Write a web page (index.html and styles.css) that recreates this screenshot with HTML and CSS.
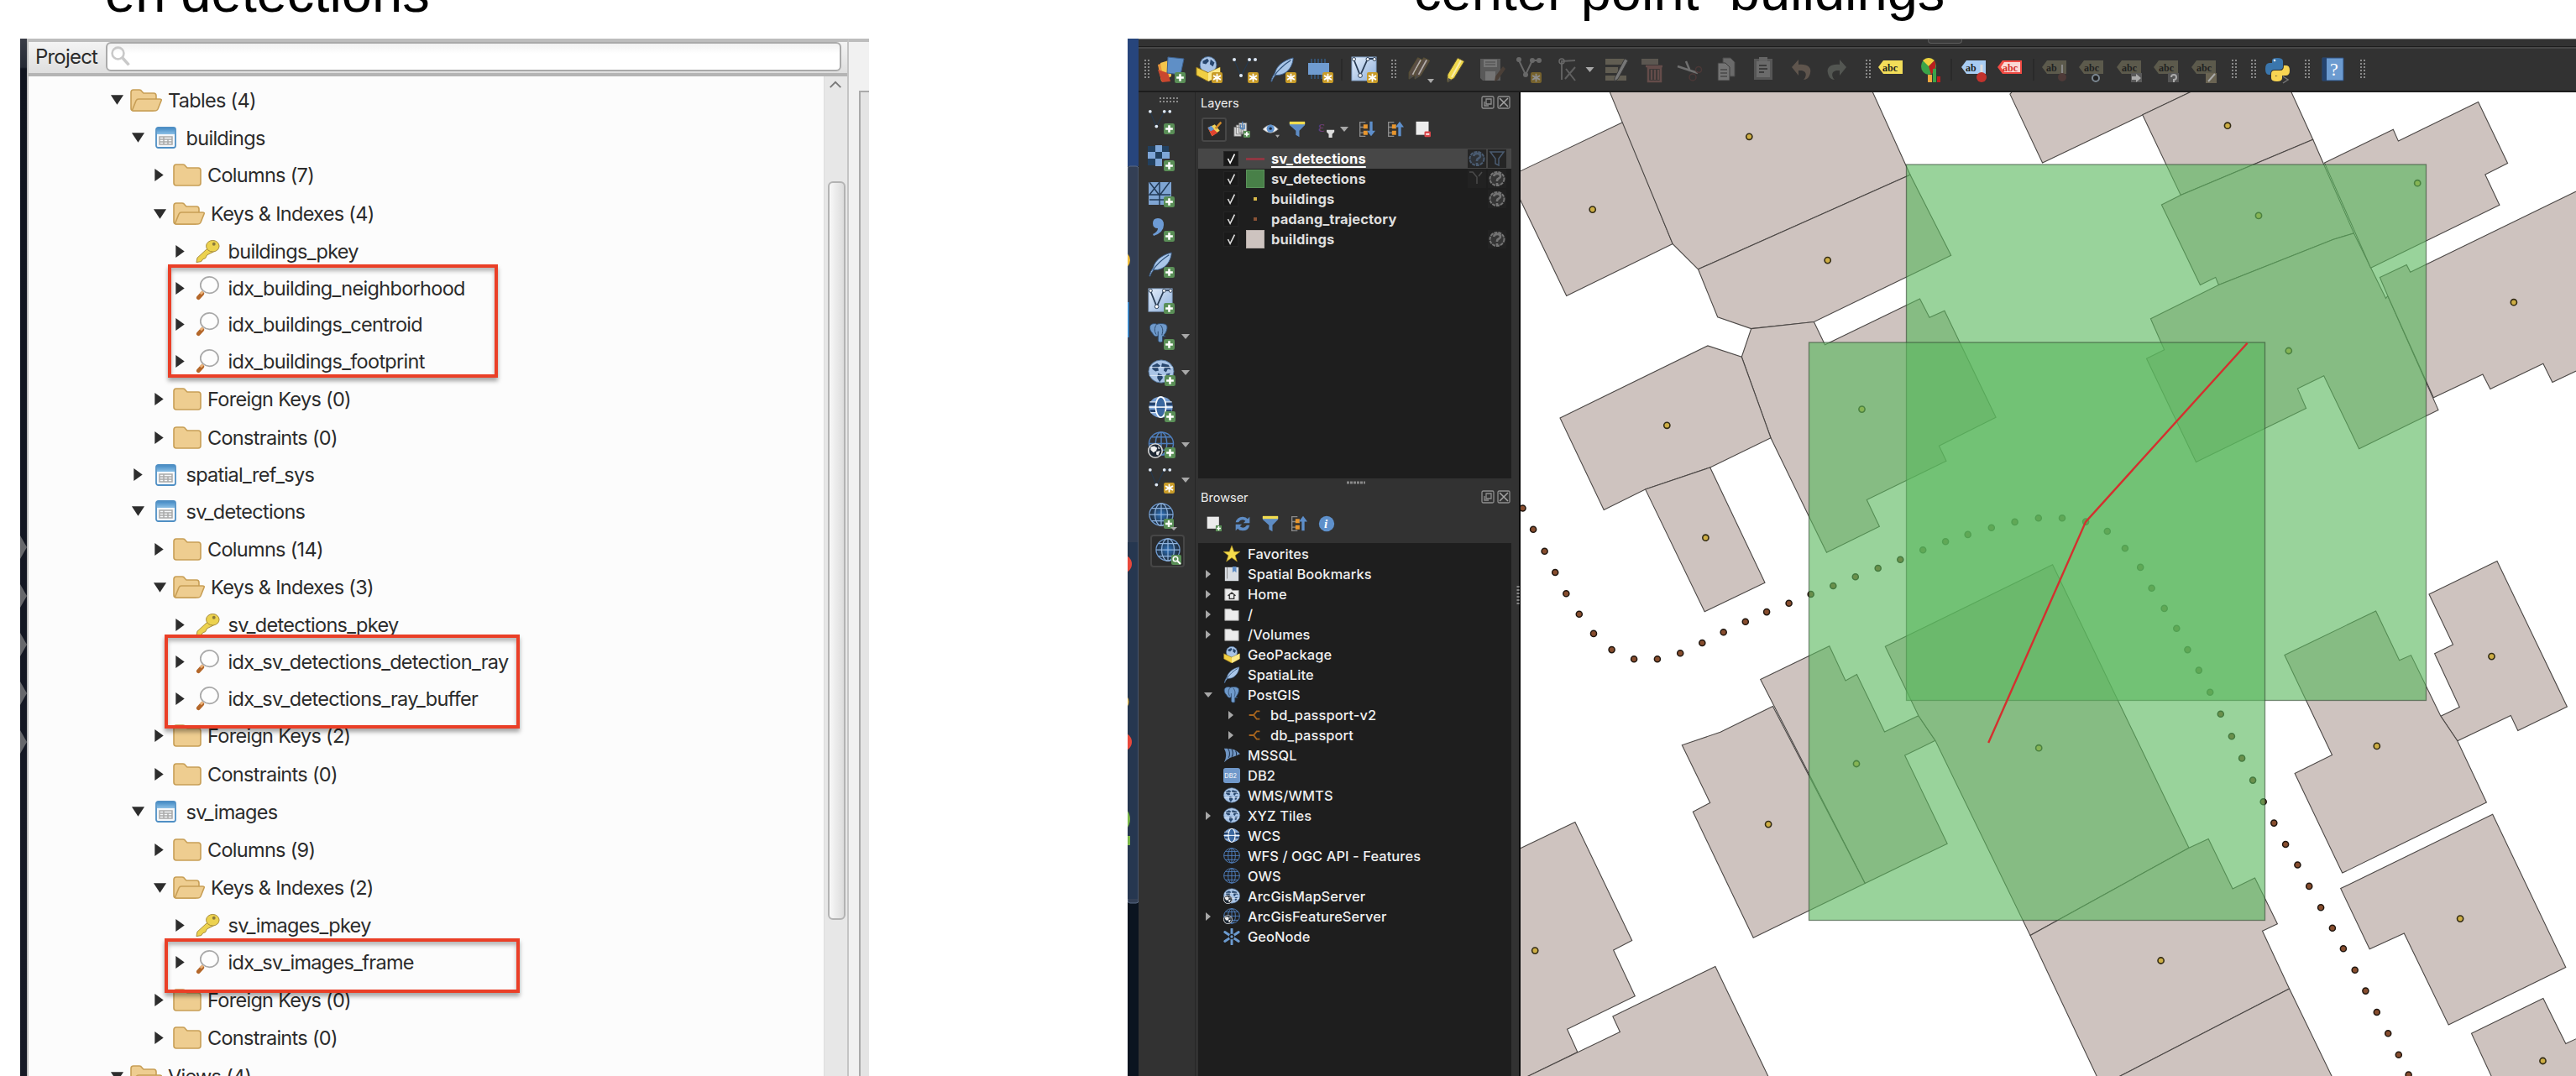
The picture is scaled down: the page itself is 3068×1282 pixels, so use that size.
FILE: index.html
```html
<!DOCTYPE html>
<html lang="en">
<head>
<meta charset="utf-8">
<title>Detections and buildings</title>
<link rel="stylesheet" href="styles.css">
</head>
<body>
<svg class="defs" aria-hidden="true">
  <defs>
    <linearGradient id="gBlue" x1="0" y1="0" x2="1" y2="1"><stop offset="0" stop-color="#e4eefa"/><stop offset="1" stop-color="#8fb0dc"/></linearGradient>
    <radialGradient id="gOcean"><stop offset="0" stop-color="#2e74c0"/><stop offset="1" stop-color="#1d2733"/></radialGradient>
    <linearGradient id="gTable" x1="0" y1="0" x2="0" y2="1"><stop offset="0" stop-color="#4a8fc7"/><stop offset="1" stop-color="#8cc0e6"/></linearGradient>
    <symbol id="plus" viewBox="0 0 12 12"><rect width="12" height="12" rx="2" fill="#5a8f57"/><path d="M6 2v8M2 6h8" stroke="#fff" stroke-width="2.4"/></symbol>
    <symbol id="star" viewBox="0 0 12 12"><rect width="12" height="12" rx="2" fill="#c99c28"/><path d="M6 1.5v9M1.8 3.8l8.4 4.4M10.2 3.8L1.8 8.2" stroke="#fff" stroke-width="1.6"/></symbol>
    <symbol id="vnodes" viewBox="0 0 32 32"><path d="M3 4L11 24L21 4h7" fill="none" stroke="#25394f" stroke-width="1.2"/><g fill="#dfe9f5"><circle cx="3" cy="4" r="2"/><circle cx="11" cy="23" r="2"/><circle cx="21" cy="4" r="2"/><circle cx="28" cy="4" r="2"/></g></symbol>
    <symbol id="featherShape" viewBox="0 0 32 32"><path d="M2 31C3 26 5 23 7 20C9 11 18 4 30 1C30 8 26 17 18 21C14 23 10 23 8 23C6 25 4 27 3 31Z" fill="#a9c6e8" stroke="#3c5f8c" stroke-width="1"/><path d="M6 24C12 15 19 9 27 4" fill="none" stroke="#2f527c" stroke-width="1.3"/></symbol>
    <symbol id="vecbox" viewBox="0 0 32 32"><rect x="1" y="1" width="29" height="28" fill="url(#gBlue)" stroke="#88a6cb"/><path d="M3 3L11 23L20 3h9" fill="none" stroke="#2a3d55" stroke-width="1.8"/><g fill="#fff" stroke="#2a3d55"><circle cx="3.500" cy="3.500" r="2"/><circle cx="11" cy="23" r="2.400"/><circle cx="20" cy="3.500" r="2"/><circle cx="28" cy="3.500" r="2"/></g></symbol>
    <symbol id="pencil" viewBox="0 0 32 32"><path d="M7 22L19 2l8 4L15 26l-8 5z" fill="currentColor" stroke="#5b5230" stroke-width="1"/><path d="M12 25L23 5" stroke="#fff" stroke-opacity=".55" stroke-width="2"/><path d="M7 31l1-5 4 2z" fill="#4a4a4a"/></symbol>
    <symbol id="map" viewBox="0 0 32 32"><ellipse cx="16" cy="15" rx="15.500" ry="14" fill="#a9c4e6" stroke="#56799f"/><path d="M5 8l6-3 4 3-3 3 1 3-4 1-4-3zM17 5l8 2 3 6-4-1-2 4-3-2 1-4-4-1zM12 17l5 2 1 4-4 5-3-5zM22 18l5-1-2 6-3 1z" fill="#28476e"/><path d="M2 10h28M2 20h28" stroke="#dfeaf7" stroke-width="1"/></symbol>
    <symbol id="globe" viewBox="0 0 32 32"><ellipse cx="16" cy="15" rx="15" ry="14" fill="url(#gOcean)" stroke="#6d9ad0" stroke-width="1.400"/><path d="M1 15h30M4 7h24M4 23h24M16 1v28" stroke="#8fb2dc" stroke-width="1.300"/><ellipse cx="16" cy="15" rx="8" ry="14" fill="none" stroke="#8fb2dc" stroke-width="1.300"/></symbol>
    <symbol id="wireglobe" viewBox="0 0 32 32"><g fill="none" stroke="#4f7fbd" stroke-width="1.500"><ellipse cx="16" cy="15" rx="15" ry="14"/><ellipse cx="16" cy="15" rx="7" ry="14"/><path d="M1 15h30M4 7h24M4 23h24M16 1v28"/></g></symbol>
    <symbol id="wcs" viewBox="0 0 32 32"><ellipse cx="16" cy="15" rx="15" ry="13.500" fill="#7ba3d6"/><path d="M2 8h28l1 5H1zM2 18h28l-2 4H4z" fill="#24426c"/><path d="M2 8.500h28M3 22h26" stroke="#dfeaf7" stroke-width="1.300"/><ellipse cx="16" cy="15" rx="6.500" ry="13" fill="#3a679f" stroke="#fff" stroke-width="1.800"/><path d="M1 15h30" stroke="#fff" stroke-width="1.600"/></symbol>
    <symbol id="africa" viewBox="0 0 16 16"><circle cx="8" cy="8" r="7.300" fill="#1d2733" stroke="#d8d8d8" stroke-width="1.400"/><path d="M3 4l4-1 3 2-1 3-3 2-3-3zM9 9l4-1-2 5-2-1zM11 3l2 3-2 0z" fill="#eee"/></symbol>
    <symbol id="elephant" viewBox="0 0 32 32"><path d="M2 5C4 0 11 0 13 2C17 0 27 0 29 4C31 10 26 18 24 19L27 21L22 21V29C19 32 15 30 15 27V20C11 23 8 20 6 16C3 13 1 9 2 5Z" fill="#6f9acb" stroke="#2d4a6d" stroke-width="1.300"/><path d="M12 3c-3 5-3 10 0 15M19 3c4 5 4 10 2 16M15 13v8" fill="none" stroke="#2d4a6d" stroke-width="1.300"/></symbol>
    <symbol id="geopkg" viewBox="0 0 32 32"><circle cx="16" cy="11" r="10.500" fill="#a9c4e6" stroke="#4d6f98"/><path d="M9 6l6-3 2 3-4 4-4-1zM19 4l5 4-2 5-4-3z" fill="#28476e"/><path d="M1 14l15 7 15-7v10l-15 8-15-8z" fill="#f1cf43" stroke="#93751a"/><path d="M16 21v11l15-8V14z" fill="#fbe98a"/></symbol>
    <symbol id="funnel" viewBox="0 0 24 24"><path d="M1 2h22v4l-8 8v9l-5-3v-6L1 6z" fill="#5e8cc4"/><path d="M1 1h22v4H1z" fill="#f2dc4e"/></symbol>
    <symbol id="treedown" viewBox="0 0 24 24"><path d="M10 2H2v20h8M2 9h6M2 17h6" fill="none" stroke="#8c8c8c" stroke-width="1.600"/><path d="M7 5h6v6H7zM7 14h6v6H7z" fill="#e8962e"/><path d="M16 1h4v13h4l-6 8-6-8h4z" fill="#5e8fcb"/></symbol>
    <symbol id="treeup" viewBox="0 0 24 24"><path d="M10 2H2v20h8M2 9h6M2 17h6" fill="none" stroke="#8c8c8c" stroke-width="1.600"/><path d="M7 5h6v6H7zM7 14h6v6H7z" fill="#e8962e"/><path d="M16 22h4V9h4l-6-8-6 8h4z" fill="#5e8fcb"/></symbol>
    <symbol id="tag" viewBox="0 0 32 32"><path d="M1 13L7 5h23v16H7z" fill="currentColor"/></symbol>
    <symbol id="dots" viewBox="0 0 8 24"><path d="M2 0v24M6 0v24" stroke="#8a8a8a" stroke-width="2" stroke-dasharray="2 2"/></symbol>
    <symbol id="dotsH" viewBox="0 0 24 8"><path d="M0 2h24M0 6h24" stroke="#8a8a8a" stroke-width="2" stroke-dasharray="2 2"/></symbol>
    <symbol id="float" viewBox="0 0 16 16"><rect x="1" y="1" width="14" height="14" rx="1.500" fill="none" stroke="#8e8e8e" stroke-width="1.300"/><path d="M6 4h6v6H6zM4 7v5h5" fill="none" stroke="#8e8e8e" stroke-width="1.300"/></symbol>
    <symbol id="close" viewBox="0 0 16 16"><rect x="1" y="1" width="14" height="14" rx="1.500" fill="none" stroke="#8e8e8e" stroke-width="1.300"/><path d="M3 3l10 10M13 3L3 13" stroke="#a5a5a5" stroke-width="1.500"/></symbol>
    <symbol id="crs" viewBox="0 0 22 22"><ellipse cx="11" cy="11" rx="8.500" ry="8" fill="currentColor" fill-opacity=".25" stroke="currentColor" stroke-width="2" stroke-dasharray="4 1"/><path d="M7 8c1-4 8-4 8 0 0 3-4 2-4 5v1M11 16v2" fill="none" stroke="currentColor" stroke-width="2.600"/></symbol>
    <symbol id="folderClosed" viewBox="0 0 34 27"><path d="M1 4Q1 1 4 1H12Q14 1 15 3L17 5H30Q33 5 33 8V23Q33 26 30 26H4Q1 26 1 23Z" fill="#eecd90" stroke="#c79e55" stroke-width="1.600"/></symbol>
    <symbol id="folderOpen" viewBox="0 0 38 27"><path d="M1 4Q1 1 4 1H11Q13 1 14 3L16 5H28Q31 5 31 8V24L27 26H4Q1 26 1 23Z" fill="#eecd90" stroke="#c79e55" stroke-width="1.600"/><path d="M3 24L7 14Q8 12 10 12H35Q38 12 37 14L33 24Q32 26 30 26H4Q2 26 3 24Z" fill="#eecd90" stroke="#c79e55" stroke-width="1.600"/></symbol>
    <symbol id="tableIcon" viewBox="0 0 25 26"><rect x="1" y="1" width="23" height="24" rx="2.500" fill="#f6f8fa" stroke="#4f8fc4" stroke-width="1.800"/><path d="M2 2h21v7H2z" fill="url(#gTable)"/><path d="M5 12h15v9H5zM5 15h15M5 18h15M10 12v9M15 15v6" fill="none" stroke="#a9a9a9" stroke-width="1.500"/></symbol>
    <symbol id="keyIcon" viewBox="0 0 30 28"><path d="M15 10L2 22l-1 5.500 6-1 2-3 3-1 2-4 8-4z" fill="#ecd24f" stroke="#a4893a" stroke-width="1"/><ellipse cx="21" cy="7.500" rx="8" ry="7" fill="#ecd24f" stroke="#a4893a"/><circle cx="22.500" cy="5" r="2" fill="#8b7a3c"/></symbol>
    <symbol id="lens" viewBox="0 0 30 30"><path d="M3.500 26.500L8 21.500" stroke="#b4672a" stroke-width="5" stroke-linecap="round"/><path d="M6 22l3-3" stroke="#e9b27b" stroke-width="3"/><ellipse cx="17" cy="11" rx="11" ry="10" fill="#fdfdfd" stroke="#a9a9a9" stroke-width="1.800"/></symbol>
    <symbol id="right" viewBox="0 0 12 18"><path d="M0 1l11 8-11 8z" fill="#2d2d2d"/></symbol>
    <symbol id="down" viewBox="0 0 18 12"><path d="M1 0h16L9 12z" fill="#2d2d2d"/></symbol>
    <symbol id="tri" viewBox="0 0 10 6"><path d="M0 0h10L5 6z" fill="#a8a8a8"/></symbol>
    <symbol id="triR" viewBox="0 0 6 10"><path d="M0 0l6 5-6 5z" fill="#a8a8a8"/></symbol>
    <symbol id="dirw" viewBox="0 0 20 18"><path d="M1 2h8l2 2h8v13H1z" fill="#ececec" stroke="#9a9a9a"/></symbol>
  </defs>
</svg>

<header class="captions">
  <h1 class="caption caption-left">en detections</h1>
  <h1 class="caption caption-right">center point&nbsp; buildings</h1>
</header>

<main class="stage">
  <section class="navigator">
    <div class="dock-edge"><i></i><i></i><i></i><i></i><i></i></div>
    <div class="nav-main">
      <div class="nav-head">
        <label>Project</label>
        <div class="search"><svg viewBox="0 0 30 30"><circle cx="11" cy="11" r="8" fill="none" stroke="#c9c9c9" stroke-width="3"/><path d="M17 17l9 10" stroke="#c9c9c9" stroke-width="4"/></svg></div>
      </div>
      <div class="nav-body">
        <ul class="tree">
          <li class="f l0"><span class="tw"><svg class="dn"><use href="#down"/></svg></span><svg class="fo"><use href="#folderOpen"/></svg>Tables (4)</li>
          <li class="l1"><span class="tw"><svg class="dn"><use href="#down"/></svg></span><svg class="tb"><use href="#tableIcon"/></svg>buildings</li>
          <li class="f l2"><span class="tw"><svg class="rt"><use href="#right"/></svg></span><svg class="fc"><use href="#folderClosed"/></svg>Columns (7)</li>
          <li class="f l2"><span class="tw"><svg class="dn"><use href="#down"/></svg></span><svg class="fo"><use href="#folderOpen"/></svg>Keys &amp; Indexes (4)</li>
          <li class="l3"><span class="tw"><svg class="rt"><use href="#right"/></svg></span><svg class="lf"><use href="#keyIcon"/></svg>buildings_pkey</li>
          <li class="l3"><span class="tw"><svg class="rt"><use href="#right"/></svg></span><svg class="lf"><use href="#lens"/></svg>idx_building_neighborhood</li>
          <li class="l3"><span class="tw"><svg class="rt"><use href="#right"/></svg></span><svg class="lf"><use href="#lens"/></svg>idx_buildings_centroid</li>
          <li class="l3"><span class="tw"><svg class="rt"><use href="#right"/></svg></span><svg class="lf"><use href="#lens"/></svg>idx_buildings_footprint</li>
          <li class="f l2"><span class="tw"><svg class="rt"><use href="#right"/></svg></span><svg class="fc"><use href="#folderClosed"/></svg>Foreign Keys (0)</li>
          <li class="f l2"><span class="tw"><svg class="rt"><use href="#right"/></svg></span><svg class="fc"><use href="#folderClosed"/></svg>Constraints (0)</li>
          <li class="l1"><span class="tw"><svg class="rt"><use href="#right"/></svg></span><svg class="tb"><use href="#tableIcon"/></svg>spatial_ref_sys</li>
          <li class="l1"><span class="tw"><svg class="dn"><use href="#down"/></svg></span><svg class="tb"><use href="#tableIcon"/></svg>sv_detections</li>
          <li class="f l2"><span class="tw"><svg class="rt"><use href="#right"/></svg></span><svg class="fc"><use href="#folderClosed"/></svg>Columns (14)</li>
          <li class="f l2"><span class="tw"><svg class="dn"><use href="#down"/></svg></span><svg class="fo"><use href="#folderOpen"/></svg>Keys &amp; Indexes (3)</li>
          <li class="l3"><span class="tw"><svg class="rt"><use href="#right"/></svg></span><svg class="lf"><use href="#keyIcon"/></svg>sv_detections_pkey</li>
          <li class="l3"><span class="tw"><svg class="rt"><use href="#right"/></svg></span><svg class="lf"><use href="#lens"/></svg>idx_sv_detections_detection_ray</li>
          <li class="l3"><span class="tw"><svg class="rt"><use href="#right"/></svg></span><svg class="lf"><use href="#lens"/></svg>idx_sv_detections_ray_buffer</li>
          <li class="f l2"><span class="tw"><svg class="rt"><use href="#right"/></svg></span><svg class="fc"><use href="#folderClosed"/></svg>Foreign Keys (2)</li>
          <li class="f l2"><span class="tw"><svg class="rt"><use href="#right"/></svg></span><svg class="fc"><use href="#folderClosed"/></svg>Constraints (0)</li>
          <li class="l1"><span class="tw"><svg class="dn"><use href="#down"/></svg></span><svg class="tb"><use href="#tableIcon"/></svg>sv_images</li>
          <li class="f l2"><span class="tw"><svg class="rt"><use href="#right"/></svg></span><svg class="fc"><use href="#folderClosed"/></svg>Columns (9)</li>
          <li class="f l2"><span class="tw"><svg class="dn"><use href="#down"/></svg></span><svg class="fo"><use href="#folderOpen"/></svg>Keys &amp; Indexes (2)</li>
          <li class="l3"><span class="tw"><svg class="rt"><use href="#right"/></svg></span><svg class="lf"><use href="#keyIcon"/></svg>sv_images_pkey</li>
          <li class="l3"><span class="tw"><svg class="rt"><use href="#right"/></svg></span><svg class="lf"><use href="#lens"/></svg>idx_sv_images_frame</li>
          <li class="f l2"><span class="tw"><svg class="rt"><use href="#right"/></svg></span><svg class="fc"><use href="#folderClosed"/></svg>Foreign Keys (0)</li>
          <li class="f l2"><span class="tw"><svg class="rt"><use href="#right"/></svg></span><svg class="fc"><use href="#folderClosed"/></svg>Constraints (0)</li>
          <li class="f l0"><span class="tw"><svg class="dn"><use href="#down"/></svg></span><svg class="fo"><use href="#folderOpen"/></svg>Views (4)</li>
        </ul>
        <div class="scroll"><svg viewBox="0 0 16 10"><path d="M1 9l7-7 7 7" fill="none" stroke="#777" stroke-width="2"/></svg><div class="thumb"></div></div>
      </div>
    </div>
    <div class="nav-gutter"><div class="next-pane"></div></div>
    <div class="mark mark-a"></div>
    <div class="mark mark-b"></div>
    <div class="mark mark-c"></div>
  </section>

  <section class="gis">
    <svg class="desktop" viewBox="0 0 13 1236" preserveAspectRatio="none">
      <rect width="13" height="1236" fill="#0b1420"/><rect width="13" height="152" fill="#27457c"/>
      <rect y="152" width="13" height="878" rx="3" fill="#333f55"/><rect y="152" width="13" height="878" rx="3" fill="none" stroke="#5b6b85"/>
      <path d="M12 600v425H0V600z" fill="#263750"/>
      <circle cx="-8" cy="264" r="11" fill="#f0bd3d"/><rect y="314" width="1.500" height="42" fill="#3f9be8"/><circle cx="-6" cy="626" r="11" fill="#e8483c"/><circle cx="-6" cy="838" r="11" fill="#e8483c"/><circle cx="-8" cy="790" r="9.500" fill="#e6b947"/><circle cx="-14" cy="930" r="17" fill="#79b648"/><rect y="950" width="3" height="11" fill="#79b648"/>
    </svg>
    <div class="window">
      <div class="topstrip"><i></i></div>
      <div class="toolbar">
        <svg class="h"><use href="#dots"/></svg>
        <svg viewBox="0 0 32 32"><path d="M0 10l13-4v20l-9 4z" fill="#e9973c"/><path d="M3 8l13-4v20l-9 5z" fill="#f3c54b"/><path d="M0 16l12 4 3 10-10 1z" fill="#c9472f"/><path d="M12 1l19 2-4 19-16-2z" fill="#5f8fc6" stroke="#3d5f8b"/><use href="#plus" x="20" y="19" width="13" height="13"/></svg>
        <svg viewBox="0 0 32 32"><use href="#geopkg" width="32" height="30"/><use href="#star" x="20" y="19" width="13" height="13"/></svg>
        <svg viewBox="0 0 32 32"><use href="#vnodes" width="32" height="32"/><use href="#star" x="19" y="19" width="13" height="13"/></svg>
        <svg viewBox="0 0 32 32"><use href="#featherShape" width="30" height="32"/><use href="#star" x="19" y="19" width="13" height="13"/></svg>
        <svg viewBox="0 0 32 32"><path d="M6 3v24M10 3v24M14 3v24M18 3v24M22 3v24" stroke="#33506f" stroke-width="2"/><rect x="2" y="8" width="25" height="14" fill="#6f9cd1"/><use href="#star" x="19" y="19" width="13" height="13"/></svg>
        <i class="sep"></i>
        <svg viewBox="0 0 32 32"><use href="#vecbox" width="32" height="32"/><use href="#star" x="19" y="19" width="13" height="13"/></svg>
        <svg class="h"><use href="#dots"/></svg>
        <svg viewBox="0 0 32 32"><g color="#5a4e45"><use href="#pencil" x="-5" y="0" width="30" height="28"/><use href="#pencil" x="2" y="0" width="30" height="28"/></g><path d="M24 27h8l-4 5z" fill="#aaa"/></svg>
        <svg viewBox="0 0 32 32" color="#f0d84c"><use href="#pencil" width="32" height="32"/></svg>
        <svg viewBox="0 0 32 32" class="mid"><path d="M2 3h24v26H5l-3-3z" fill="#6e6e6e"/><path d="M6 4h16v9H6zM8 18h12v11H8z" fill="#9a9a9a"/><path d="M8 7h12M8 10h12" stroke="#555"/><path d="M20 24l9-12 3 3-9 13-4 2z" fill="#57463b"/></svg>
        <svg viewBox="0 0 32 32" class="dim"><path d="M4 5l8 17 8-17h9" fill="none" stroke="#aaa" stroke-width="2"/><g fill="#aaa"><circle cx="4" cy="4" r="3"/><circle cx="20" cy="5" r="3"/><circle cx="28" cy="5" r="3"/><circle cx="12" cy="22" r="3"/></g><use href="#star" x="18" y="19" width="13" height="13"/></svg>
        <svg viewBox="0 0 32 32" class="dim"><path d="M8 28V6L24 5M12 27L24 13M13 15l11 14" stroke="#999" stroke-width="2" fill="none"/><circle cx="8" cy="6" r="3" fill="none" stroke="#aaa" stroke-width="1.500"/></svg>
        <svg class="arrow"><use href="#tri"/></svg>
        <svg viewBox="0 0 32 32" class="dim"><path d="M3 3h25v7H3zM3 13h15v7H3zM3 23h25v6H3z" fill="#9b9179"/><path d="M14 26L26 3l4 2-12 22-4 3z" fill="#ccc" stroke="#444"/></svg>
        <svg viewBox="0 0 32 32" class="dim"><path d="M3 3h20v7H3z" fill="#8f8577"/><path d="M8 12h20M11 14h15v16H11zM15 16v12M19 16v12M23 16v12" fill="none" stroke="#a16c68" stroke-width="2.500"/></svg>
        <svg viewBox="0 0 32 32" class="dim"><path d="M4 12l24 8M14 6l5 12" stroke="#bbb" stroke-width="2.500"/><circle cx="22" cy="25" r="4" fill="none" stroke="#6a403e" stroke-width="1.500"/><circle cx="29" cy="16" r="3.500" fill="none" stroke="#6a403e" stroke-width="1.500"/></svg>
        <svg viewBox="0 0 32 32" class="mid"><path d="M12 2h9l5 5v17H12z" fill="#888" stroke="#555"/><path d="M6 8h9l5 5v16H6z" fill="#989898" stroke="#444"/><path d="M9 16h8M9 20h8M9 24h8" stroke="#555" stroke-width="1.500"/></svg>
        <svg viewBox="0 0 32 32" class="mid"><path d="M5 3h22v25H5z" fill="#6a6a6a"/><path d="M8 6h16v19H8z" fill="#8a8a8a"/><path d="M11 1h10v5H11z" fill="#808080"/><path d="M11 11h9M11 15h10M11 19h6" stroke="#444" stroke-width="2"/></svg>
        <svg viewBox="0 0 32 32" class="dim"><path d="M5 13l8-9v6c10-1 16 3 14 10-1 5-4 8-8 8 4-4 5-12-6-11v6z" fill="#96806e"/></svg>
        <svg viewBox="0 0 32 32" class="dim"><path d="M27 13l-8-9v6C9 9 3 13 5 20c1 5 4 8 8 8-4-4-5-12 6-11v6z" fill="#7d837b"/></svg>
        <svg class="h"><use href="#dots"/></svg>
        <svg viewBox="0 0 32 32" color="#f2dd59"><use href="#tag" width="32" height="32"/><text x="6" y="18" class="abc">abc</text></svg>
        <svg viewBox="0 0 32 32"><ellipse cx="15" cy="12" rx="9" ry="10" fill="#3ba349"/><path d="M15 12L8 5q7-6 14 0z" fill="#f2cf3e"/><path d="M15 12l7-7q4 8-4 17z" fill="#b81f1f"/><path d="M14 22h5v9h-5z" fill="#f2a83e"/><path d="M20 15h4v16h-4z" fill="#3ba349"/><path d="M25 24h4v7h-4z" fill="#b81f1f"/></svg>
        <i class="sep"></i>
        <svg viewBox="0 0 32 32" color="#a8ccf2"><use href="#tag" width="32" height="32"/><text x="6" y="18" class="abc">ab</text><path d="M25 10v15" stroke="#ddd" stroke-width="3"/><circle cx="25" cy="25" r="6" fill="#c2322c"/></svg>
        <svg viewBox="0 0 32 32" color="#f04a43"><use href="#tag" width="32" height="32"/><path d="M5 13l4-6h19v12H9z" fill="#fbd8d4"/><text x="7" y="18" class="abc red">abc</text></svg>
        <i class="sep"></i>
        <svg viewBox="0 0 32 32" class="lbl"><use href="#tag" width="32" height="32"/><text x="6" y="18" class="abc">ab</text><path d="M25 10v14" stroke="#888" stroke-width="2"/><circle cx="25" cy="25" r="5" fill="#4e3a38"/></svg>
        <svg viewBox="0 0 32 32" class="lbl"><use href="#tag" width="32" height="32"/><text x="7" y="18" class="abc">abc</text><circle cx="21" cy="26" r="4" fill="#222" stroke="#7b8791" stroke-width="2"/></svg>
        <svg viewBox="0 0 32 32" class="lbl"><use href="#tag" width="32" height="32"/><text x="7" y="18" class="abc">abc</text><path d="M18 20h13v11H18z" fill="#5a5a5a"/><path d="M19 24h5v-3l6 5-6 5v-3h-5z" fill="#aaa"/></svg>
        <svg viewBox="0 0 32 32" class="lbl"><use href="#tag" width="32" height="32"/><text x="7" y="18" class="abc">abc</text><path d="M18 20h13v11H18z" fill="#555"/><path d="M22 25a3 3 0 1 1 3 3v3" fill="none" stroke="#aaa" stroke-width="2"/></svg>
        <svg viewBox="0 0 32 32" class="lbl"><use href="#tag" width="32" height="32"/><text x="7" y="18" class="abc">abc</text><path d="M18 20h13v12H18z" fill="#6a6453"/><path d="M21 30l8-9" stroke="#aaa" stroke-width="2"/></svg>
        <svg class="h"><use href="#dots"/></svg>
        <svg class="h"><use href="#dots"/></svg>
        <svg viewBox="0 0 32 32"><path d="M10 9V5q0-3 6-3 7 0 7 4v6q0 4-4 4h-7q-4 0-4 6H6q-4 0-4-7t5-7h10V9z" fill="#3a76ad"/><path d="M22 21v5q0 4-6 4-7 0-7-4v-5q0-4 4-4h7q4 0 4-6h3q4 0 4 6 0 6-5 6H14v1z" fill="#f7d452"/><circle cx="13" cy="5" r="1.300" fill="#fff"/><path d="M23 24l6 4-6 4" fill="none" stroke="#777" stroke-width="1.500"/></svg>
        <svg class="h"><use href="#dots"/></svg>
        <svg viewBox="0 0 32 32"><path d="M4 2h25v27H4z" fill="#6c9bd0" stroke="#2b4c7b"/><path d="M4 2h5v27H4z" fill="#24436e"/><text x="13" y="23" class="qm">?</text></svg>
        <svg class="h"><use href="#dots"/></svg>
      </div>
      <div class="workspace">
        <div class="rail">
          <svg class="grip"><use href="#dotsH"/></svg>
          <div><svg viewBox="0 0 32 32"><use href="#vnodes" width="30" height="30"/><use href="#plus" x="19" y="18" width="13" height="13"/></svg></div>
          <div><svg viewBox="0 0 32 32"><path d="M9 1h8v8H9zM0 9h9v8H0zM17 9h9v8h-9zM9 17h8v9H9z" fill="#7ea6d8"/><path d="M0 2h9v7H0zM17 2h8v7h-8zM9 9h8v8H9zM0 17h9v8H0z" fill="#22405f"/><use href="#plus" x="19" y="19" width="13" height="13"/></svg></div>
          <div><svg viewBox="0 0 32 32"><path d="M1 2h27v27H1z" fill="#7fa5d3"/><path d="M2 2l12 16L26 2M14 2L2 17h25M14 2v27M2 23h24" fill="none" stroke="#223a57" stroke-width="1.500"/><use href="#plus" x="19" y="19" width="13" height="13"/></svg></div>
          <div><svg viewBox="0 0 32 32"><path d="M6 22q6-3 6-7-6 0-6-6t6-6q7 0 7 8 0 9-12 13z" fill="#6d9bd4"/><use href="#plus" x="19" y="18" width="13" height="13"/></svg></div>
          <div><svg viewBox="0 0 32 32"><use href="#featherShape" width="30" height="30"/><use href="#plus" x="19" y="18" width="13" height="13"/></svg></div>
          <div><svg viewBox="0 0 32 32"><use href="#vecbox" width="31" height="31"/><use href="#plus" x="19" y="18" width="13" height="13"/></svg></div>
          <div><svg viewBox="0 0 32 32"><use href="#elephant" width="26" height="24"/><use href="#plus" x="19" y="19" width="13" height="13"/></svg><svg class="arrow"><use href="#tri"/></svg></div>
          <div><svg viewBox="0 0 32 32"><use href="#map" width="32" height="31"/><use href="#plus" x="20" y="19" width="13" height="13"/></svg><svg class="arrow"><use href="#tri"/></svg></div>
          <div><svg viewBox="0 0 32 32"><use href="#wcs" width="31" height="30"/><use href="#plus" x="20" y="19" width="13" height="13"/></svg></div>
          <div><svg viewBox="0 0 32 32"><use href="#wireglobe" width="32" height="31"/><use href="#africa" x="0" y="14" width="18" height="18"/><use href="#plus" x="20" y="19" width="13" height="13"/></svg><svg class="arrow"><use href="#tri"/></svg></div>
          <div><svg viewBox="0 0 32 32"><use href="#vnodes" width="30" height="30"/><use href="#star" x="19" y="19" width="13" height="13"/></svg><svg class="arrow"><use href="#tri"/></svg></div>
          <div><svg viewBox="0 0 32 32"><use href="#globe" width="32" height="30"/><use href="#plus" x="19" y="19" width="12" height="12"/><path d="M27 29h8l-4 4z" fill="#aaa"/></svg></div>
          <div class="active"><svg viewBox="0 0 32 32"><use href="#globe" width="32" height="30"/><rect x="20" y="20" width="12" height="12" rx="2" fill="#5a8f57"/><circle cx="25" cy="25" r="2.800" fill="none" stroke="#fff" stroke-width="1.500"/><path d="M27 27l4 4" stroke="#fff" stroke-width="2"/></svg></div>
        </div>
        <div class="panels">
          <div class="panel layers">
            <div class="ptitle"><span>Layers</span><svg><use href="#float"/></svg><svg><use href="#close"/></svg></div>
            <div class="ptools ltools">
              <span class="pressed"><svg viewBox="0 0 24 24"><path d="M3 10l10-5 7 9-11 8z" fill="#f0d35b"/><path d="M3 10l4-2 10 9-8 5z" fill="#e0432f"/><path d="M3 10l5-3 4 5-5 3z" fill="#5d93d0"/><path d="M14 11l8-9" stroke="#d18b2a" stroke-width="3"/></svg></span>
              <svg viewBox="0 0 24 24"><path d="M1 9h10v13H1zM4 6h10v13H4zM8 3h11v14H8z" fill="#ddd" stroke="#777"/><path d="M13 1v12M10 5v6h6V5" fill="none" stroke="#4d7fb8" stroke-width="1.500"/><use href="#plus" x="14" y="14" width="10" height="10"/></svg>
              <svg viewBox="0 0 24 24"><path d="M0 12Q11 0 22 12Q11 22 0 12Z" fill="#f2f2f2" stroke="#999"/><circle cx="11" cy="11" r="5.500" fill="#5e92cf"/><circle cx="11" cy="11" r="2" fill="#1b2a40"/><path d="M18 20h6l-3 4z" fill="#aaa"/></svg>
              <svg><use href="#funnel"/></svg>
              <svg viewBox="0 0 24 24"><text x="0" y="15" class="eps">ε</text><path d="M12 13h11v3l-3 3v5h-5v-5l-3-3z" fill="#ddd"/></svg>
              <svg class="arrow"><use href="#tri"/></svg>
              <svg><use href="#treedown"/></svg>
              <svg><use href="#treeup"/></svg>
              <svg viewBox="0 0 24 24"><path d="M3 1h18v19H3z" fill="#ededed"/><rect x="15" y="15" width="9" height="8" rx="1.500" fill="#d9464a"/><path d="M17 19h5" stroke="#fff" stroke-width="2"/></svg>
            </div>
            <ul class="layerlist">
              <li class="sel"><svg class="chk" viewBox="0 0 18 18"><path d="M5 9l3 6 6-12" fill="none" stroke="#fff" stroke-width="1.800"/></svg><i class="sw line"></i><b>sv_detections</b><svg class="ind box navy"><use href="#crs"/></svg><svg class="ind box navy" viewBox="0 0 22 22"><path d="M3 3h16l-6 8v8l-4-2v-6z" fill="none" stroke="currentColor" stroke-width="1.500"/></svg></li>
              <li><svg class="chk" viewBox="0 0 18 18"><path d="M5 9l3 6 6-12" fill="none" stroke="#ddd" stroke-width="1.800"/></svg><i class="sw green"></i><b>sv_detections</b><svg class="ind faint" viewBox="0 0 22 22"><path d="M2 3h4l5 6v8M17 3l-4 5" fill="none" stroke="#4b4b4b" stroke-width="1.500"/></svg><svg class="ind"><use href="#crs"/></svg></li>
              <li><svg class="chk" viewBox="0 0 18 18"><path d="M5 9l3 6 6-12" fill="none" stroke="#ddd" stroke-width="1.800"/></svg><i class="sw yellow"></i><b>buildings</b><svg class="ind"><use href="#crs"/></svg></li>
              <li><svg class="chk" viewBox="0 0 18 18"><path d="M5 9l3 6 6-12" fill="none" stroke="#ddd" stroke-width="1.800"/></svg><i class="sw brown"></i><b>padang_trajectory</b></li>
              <li><svg class="chk" viewBox="0 0 18 18"><path d="M5 9l3 6 6-12" fill="none" stroke="#ddd" stroke-width="1.800"/></svg><i class="sw beige"></i><b>buildings</b><svg class="ind"><use href="#crs"/></svg></li>
            </ul>
          </div>
          <svg class="splitter" viewBox="0 0 24 4"><path d="M1 2h22" stroke="#888" stroke-width="3" stroke-dasharray="3 1"/></svg>
          <div class="panel browser">
            <div class="ptitle"><span>Browser</span><svg><use href="#float"/></svg><svg><use href="#close"/></svg></div>
            <div class="ptools btools">
              <svg viewBox="0 0 24 24"><path d="M2 2h17v17H2z" fill="#ececec"/><use href="#plus" x="14" y="14" width="9" height="9"/></svg>
              <svg viewBox="0 0 24 24"><path d="M2 10q2-8 10-8 5 0 7 3l3-3v9h-9l3-3q-6-4-10 2zM22 14q-2 8-10 8-5 0-7-3l-3 3v-9h9l-3 3q6 4 10-2z" fill="#5e8cc4"/></svg>
              <svg><use href="#funnel"/></svg>
              <svg><use href="#treeup"/></svg>
              <svg viewBox="0 0 24 24"><circle cx="12" cy="12" r="11" fill="#5e90cb"/><text x="8.500" y="18" class="info">i</text></svg>
            </div>
            <ul class="browse">
              <li><i></i><svg viewBox="0 0 22 22"><path d="M11 0l3 8h8l-6.500 5L18 21l-7-5-7 5 2.500-8L0 8h8z" fill="#f5dc4b" stroke="#a88a20" stroke-width=".7"/></svg>Favorites</li>
              <li><i><svg><use href="#triR"/></svg></i><svg viewBox="0 0 22 22"><path d="M2 2h18v18H2z" fill="#d9dde2"/><path d="M5 2v15" stroke="#888"/><path d="M12 1h5v8l-2.500-2L12 9z" fill="#5e8cc4"/></svg>Spatial Bookmarks</li>
              <li><i><svg><use href="#triR"/></svg></i><svg viewBox="0 0 22 22"><use href="#dirw" x="1" y="2" width="20" height="18"/><path d="M6 13l5-4 5 4M8 12v5h6v-5" fill="none" stroke="#333" stroke-width="1.400"/></svg>Home</li>
              <li><i><svg><use href="#triR"/></svg></i><svg viewBox="0 0 22 22"><use href="#dirw" x="1" y="2" width="20" height="18"/></svg>/</li>
              <li><i><svg><use href="#triR"/></svg></i><svg viewBox="0 0 22 22"><use href="#dirw" x="1" y="2" width="20" height="18"/></svg>/Volumes</li>
              <li><i></i><svg><use href="#geopkg" width="22" height="20"/></svg>GeoPackage</li>
              <li><i></i><svg><use href="#featherShape" width="22" height="20"/></svg>SpatiaLite</li>
              <li><i><svg class="open"><use href="#tri"/></svg></i><svg><use href="#elephant"/></svg>PostGIS</li>
              <li class="child"><i><svg><use href="#triR"/></svg></i><svg viewBox="0 0 22 22"><path d="M4 11h6M18 6h-4l-4 5 4 5h4" fill="none" stroke="#a8651e" stroke-width="2"/></svg>bd_passport-v2</li>
              <li class="child"><i><svg><use href="#triR"/></svg></i><svg viewBox="0 0 22 22"><path d="M4 11h6M18 6h-4l-4 5 4 5h4" fill="none" stroke="#a8651e" stroke-width="2"/></svg>db_passport</li>
              <li><i></i><svg viewBox="0 0 22 22"><path d="M1 2q14-1 21 7-6 3-13 5-4 2-8 6 5-9 0-18z" fill="#7096c4"/><path d="M6 2q4 6 1 12M11 3q3 5 0 10M16 5q2 3 1 6" fill="none" stroke="#1f3450" stroke-width="1.200"/></svg>MSSQL</li>
              <li><i></i><svg viewBox="0 0 22 22"><rect y="1" width="22" height="20" rx="3" fill="#7098ca"/><text x="1.500" y="14" class="db2">DB2</text></svg>DB2</li>
              <li><i></i><svg><use href="#map"/></svg>WMS/WMTS</li>
              <li><i><svg><use href="#triR"/></svg></i><svg><use href="#map"/></svg>XYZ Tiles</li>
              <li><i></i><svg><use href="#wcs"/></svg>WCS</li>
              <li><i></i><svg><use href="#wireglobe"/></svg>WFS / OGC API - Features</li>
              <li><i></i><svg><use href="#wireglobe"/></svg>OWS</li>
              <li><i></i><svg viewBox="0 0 22 22"><use href="#map" width="22" height="22"/><use href="#africa" x="0" y="9" width="12" height="12"/></svg>ArcGisMapServer</li>
              <li><i><svg><use href="#triR"/></svg></i><svg viewBox="0 0 22 22"><use href="#wireglobe" width="22" height="22"/><use href="#africa" x="0" y="9" width="12" height="12"/></svg>ArcGisFeatureServer</li>
              <li><i></i><svg viewBox="0 0 22 22"><path d="M11 1v20M2 5l18 12M20 5L2 17" stroke="#6c9bd0" stroke-width="3.200" stroke-linecap="round"/><circle cx="11" cy="11" r="3.500" fill="#1e1e1e"/><circle cx="11" cy="11" r="1.800" fill="#6c9bd0"/></svg>GeoNode</li>
            </ul>
          </div>
        </div>
        <div class="vsplit"><svg viewBox="0 0 4 24"><path d="M2 0v24" stroke="#888" stroke-width="3" stroke-dasharray="2 2"/></svg></div>
        <svg class="canvas" viewBox="1811 110 1257 1172">
          <g class="bld">
            <path d="M1800 209L1933 145.500L1992.200 290.600L1865.700 352.500L1800 216Z"/>
            <path d="M1917 109L1912.500 99H2225.500L2230 109L2275 208.300L2022.500 320.800L1992.200 290.600Z"/>
            <path d="M2022.500 320.800L2275 208.300L2323.700 304.300L2160.400 383.500L2085.700 391.600L2045.700 377.800Z"/>
            <path d="M2085.700 391.600L2160.400 383.500L2173.500 410.700L2286.500 356L2298 378.200L2315.900 370.200L2377.100 497.200L2309.400 531.200L2318 549.200L2223.300 595.500L2238.400 627.300L2175.500 658.300L2154.300 615L2109 521.700L2074.300 425.300Z"/>
            <path d="M1858 498L2033.900 411.900L2074.300 425.300L2109 521.700L2036.700 556.900L1959.600 582.900L1910.200 607.400Z"/>
            <path d="M1959.600 582.900L2036.700 556.900L2102 694.200L2030.200 728.800Z"/>
            <path d="M2393.900 112.200L2404 100H2629L2432.600 194.100Z"/>
            <path d="M2629 100H2724.500L2754.700 166.200L2597.200 232.400L2551.700 136.700Z"/>
            <path d="M2754.700 166.200L2803.500 277.900L2779.100 285.200L2642.400 339.500L2638.700 330.400L2620.400 339.500L2574.400 243.900L2597.200 232.400Z"/>
            <path d="M2803.500 277.900L2841.500 355.500L2843.800 352.500L2904 488.400L2809.600 534.700L2767.700 447.800L2736.400 463.100L2746.600 486.500L2615.500 550.400L2556.500 427.200L2577.700 416.800L2561.400 379.700L2642.400 339.500L2779.100 285.200Z"/>
            <path d="M2768.500 194.100L2850.300 154.300L2856.400 168.100L2951.600 121.400L2986.600 194.500L2959.800 207.900L2976.900 244.300L2823.500 319.300Z"/>
            <path d="M3080 222.300L2870.700 324.200L2866.200 315.400L2834.400 330.400L2843.800 352.500L2898.300 473.800L2956.900 445.900L2965.900 463.500L3028.900 433.300L3039.900 455.500L3080 436.500Z"/>
            <path d="M2096.700 809.400L2178.800 769.800L2198 810.900L2211.400 803.600L2244.500 872L2284.900 852.800L2304.900 882.300L2268.600 900L2319.200 1005.200L2221.200 1052.400Z"/>
            <path d="M2111.400 841.600L2221.200 1052.400L2088.200 1117.300L2016.300 967.200L2036.700 956.400L2003.300 887.700L2049 872.300Z"/>
            <path d="M2245.300 770.200L2444.600 672.800L2607 1010.200L2418 1114.600L2304.900 882.300L2284.900 852.800Z"/>
            <path d="M2607 1010.200L2630.200 999.400L2659.100 1058.900L2685.500 1045.900L2712.400 1100.800L2694.500 1109.200L2726.600 1178L2525.200 1282L2506 1292H2501.800L2497.100 1282L2418 1114.600Z"/>
            <path d="M2726.600 1178L2777 1282L2782 1292H2506L2525.200 1282Z"/>
            <path d="M2974 668.600L3057.400 842L2998.800 870.400L2990.300 852.400L2926.800 882.700L2906.900 853.200L2929.300 842.400L2899.600 778.700L2921.500 767.900L2893 708Z"/>
            <path d="M2720.900 780.600L2829.600 728L2857.600 786.700L2871.500 780.600L2906.900 853.200L2926.800 882.700L2961.400 956L2789.700 1040.100L2733.100 921.500L2777.500 899.600Z"/>
            <path d="M2787.700 1058.600L2968.700 970.300L3055.800 1152.600L2916.200 1221L2863.300 1111.900L2822.200 1130.700Z"/>
            <path d="M2943.500 1231.300L3028.900 1189.500L3055.800 1243.600L3080 1232V1292H2972L2967.100 1282Z"/>
            <path d="M1800 1016L1875.900 979.500L1943.700 1120.400L1921.600 1131.900L1947.300 1186.800L1866.500 1226.300L1878.800 1253.600L1820.400 1282L1800 1292Z"/>
            <path d="M1800 1292L1820.400 1282L1929.400 1229.400L1920.800 1211L2042.900 1151.500L2105.700 1282L2110 1292Z"/>
          </g>
          <g class="track">
            <path id="trk" d="M1813.500 605.500h0M1826.100 630.700h0M1839.600 656.800h0M1852.200 682h0M1865.300 707.300h0M1880.800 731.800h0M1898 754.900h0M1919.600 774.100h0M1946.100 785.200h0M1973.900 785.200h0M2001.200 778.300h0M2027.300 766h0M2052.700 753.300h0M2078.800 740.700h0M2104.100 729.100h0M2130.600 718.800h0M2156.700 708h0M2183.300 698h0M2209.800 687.300h0M2236.700 677h0M2263.300 666.700h0M2290.200 655.200h0M2317.100 645.300h0M2343.700 636.900h0M2371.800 628.800h0M2399.600 621.900h0M2427.800 617.300h0M2456 617.300h0M2484.100 621.600h0M2509.800 633h0M2530.900 653.300h0M2549.200 675.900h0M2562.600 700.700h0M2577.700 724.900h0M2592.300 748.700h0M2605.400 774.100h0M2618.800 798.600h0M2632.200 824.700h0M2644.800 850.800h0M2657.900 877.300h0M2670.100 903.400h0M2683.100 929.600h0M2695.700 955.300h0M2708.300 980.600h0M2722.100 1006h0M2736.400 1030.500h0M2750.200 1055.900h0M2764.100 1081.200h0M2777.900 1105.800h0M2790.900 1130.300h0M2804.700 1155.700h0M2817.400 1180.600h0M2830.800 1206h0M2844.200 1231.300h0M2856.800 1256.700h0M2868.600 1280.500h0"/>
            <use href="#trk" class="core"/>
          </g>
          <g class="track cent">
            <path id="cen" d="M2083.300 162.800h0M1896.700 249.600h0M2176.700 310.100h0M1985.300 506.800h0M2031.400 640.700h0M2217.500 487.600h0M2653 149.700h0M2690 256.900h0M2879.200 218.200h0M2725.800 418h0M2993.900 360.200h0M1828.200 1132.600h0M2106.100 982.100h0M2211 910h0M2428.200 891.200h0M2573.600 1144.500h0M2830.800 888.900h0M2967.500 782.100h0M2930.100 1094.600h0M3028.500 1264h0"/>
            <use href="#cen" class="core"/>
          </g>
          <g class="buf"><rect x="2270.500" y="196" width="619" height="638.500"/><rect x="2154.500" y="408" width="543" height="688.500"/></g>
          <path class="ray" d="M2676.600 408.800L2484.100 621.600L2368.200 885"/>
        </svg>
      </div>
    </div>
  </section>
</main>
</body>
</html>
```
FILE: styles.css
```css
* { box-sizing: border-box; }
body { margin: 0; width: 3068px; height: 1282px; overflow: hidden; background: #fff; font-family: Inter, "Liberation Sans", sans-serif; display: flex; flex-direction: column; }
ul { list-style: none; margin: 0; padding: 0; }
svg { display: block; flex: none; }
.defs { width: 0; height: 0; position: absolute; }

/* Slide captions, cut by the top edge */
.captions { height: 46px; flex: none; display: grid; grid-template-columns: 1559px 1fr; padding-left: 125px; }
.caption { margin: -31px 0 0; font: 400 65px/46px "Liberation Sans", Arial, sans-serif; color: #000; white-space: pre; }
.caption-right { margin-top: -33px; }

.stage { display: grid; grid-template-columns: 1011px 1725px; column-gap: 308px; padding-left: 24px; height: 1236px; }

/* Database navigator */
.navigator { position: relative; display: grid; grid-template-columns: 8px 979px 24px; height: 1236px; overflow: hidden; }
.dock-edge { background: linear-gradient(#3a3d47 0, #252a35 34px, #10141f 36px, #171a26); padding-top: 592px; display: flex; flex-direction: column; gap: 30px; }
.dock-edge i { border-left: 8px solid #66676b; border-top: 14px solid transparent; border-bottom: 14px solid transparent; height: 28px; }
.nav-main { border: solid #bdbdbd; border-width: 4px 2px 0 2px; border-right-color: #c4c4c4; background: #fcfcfc; display: flex; flex-direction: column; min-height: 0; }
.nav-head { height: 41px; flex: none; display: flex; align-items: center; padding: 0 7px 2px 8px; gap: 8px; background: linear-gradient(#f4f4f4, #dedede); border-bottom: 4px solid #b4b4b4; }
.nav-head label { font-size: 24px; letter-spacing: -.8px; color: #2b2b2b; width: 76px; }
.search { flex: 1; height: 35px; border: 2px solid #aaa; border-radius: 6px; background: linear-gradient(#f1f1f1, #fff 12px); padding-left: 3px; }
.search svg { width: 26px; height: 30px; }
.nav-body { flex: 1; display: flex; min-height: 0; }
.tree { flex: 1; padding-top: 6px; font-size: 23.500px; letter-spacing: -.7px; color: #2b2b2b; overflow: hidden; }
.tree li { height: 43.700px; display: flex; align-items: center; white-space: pre; padding-bottom: 1px; }
.tree li.f { height: 45.800px; }
.l0 { padding-left: 93px; } .l1 { padding-left: 118.500px; } .l2 { padding-left: 144px; } .l3 { padding-left: 168.500px; }
.tw { width: 24px; display: flex; justify-content: center; margin-right: 4px; }
.dn { width: 17px; height: 12px; } .rt { width: 12px; height: 17px; }
.fo { width: 38px; height: 27px; margin-right: 7px; }
.fc { width: 34px; height: 27px; margin-right: 7px; }
.tb { width: 25px; height: 26px; margin: 0 12px 0 4px; }
.lf { width: 29px; height: 29px; margin: 0 10px 0 2px; }
.scroll { width: 28px; border-left: 1px solid #ddd; background: #e7e7e7; padding: 5px 2px 0 4px; }
.scroll svg { width: 16px; height: 9px; margin: 0 0 111px 1px; }
.thumb { height: 880px; width: 21px; border: 2px solid #b3b3b3; border-radius: 6px; background: linear-gradient(90deg, #f8f8f8, #dcdcdc); }
.nav-gutter { background: #f1f1f1; border-top: 4px solid #bdbdbd; padding: 58px 0 0 12px; }
.next-pane { height: 1174px; background: #e4e4e4; border: solid #aaa; border-width: 2px 0 0 2px; }
.mark { position: absolute; border: 4px solid #ea3f27; box-shadow: 0 4px 5px rgba(0,0,0,.35), inset 0 4px 5px rgba(0,0,0,.28); }
.mark-a { left: 176px; top: 269px; width: 393px; height: 135px; }
.mark-b { left: 172px; top: 710px; width: 423px; height: 112px; }
.mark-c { left: 172px; top: 1072px; width: 423px; height: 65px; }

/* GIS window */
.gis { display: grid; grid-template-columns: 13px 1712px; height: 1236px; }
.desktop { width: 13px; height: 1236px; overflow: hidden; }
.window { background: #323232; display: flex; flex-direction: column; color: #eee; }
.topstrip { height: 12px; flex: none; border-top: 1px solid #777; border-bottom: 2px solid #474747; box-shadow: inset 0 -1px #1c1c1c; padding-left: 940px; }
.topstrip i { display: block; width: 41px; height: 5px; border: 1px solid #5c5c5c; border-top: 0; border-radius: 0 0 4px 4px; background: #3c3c3c; }
.toolbar { height: 52px; flex: none; padding: 0 0 1px 6px; display: grid; align-items: center; border-bottom: 2px solid #1d1d1d;
  grid-template-columns: 17px 44px 44px 45px 44px 41px 12px 47px 20px 41px 44px 44px 47px 36px 21px 43px 42px 46px 44px 45px 43px 49px 15px 46px 41px 12px 43px 43px 10px 44px 45px 44px 45px 48px 23px 16px 48px 18px 48px 8px; }
.toolbar svg { width: 32px; height: 32px; overflow: visible; }
.toolbar svg.h { width: 8px; height: 24px; }
.toolbar svg.arrow { width: 11px; height: 6px; }
.toolbar .sep { width: 2px; height: 26px; background: #2a2a2a; }
.toolbar .dim { opacity: .45; }
.toolbar .mid { opacity: .65; }
.lbl { color: #5c5a4c; }
.abc { font: 700 12px "Liberation Serif", serif; fill: #222; }
.abc.red { fill: #d22f2b; }
.qm { font: 400 22px "Liberation Serif", serif; fill: #fff; }
.eps { font: 400 22px "Liberation Serif", serif; fill: #6c3f78; }
.info { font: italic 700 18px "Liberation Serif", serif; fill: #fff; }
.db2 { font: 400 8px Inter, sans-serif; fill: #fff; }
.workspace { flex: 1; display: grid; grid-template-columns: 68px 379px 8px 1257px; min-height: 0; }
.rail { border-right: 1px solid #262626; padding-top: 5px; }
.grip { width: 24px; height: 8px; margin: 0 0 1px 25px; }
.rail div { height: 42.700px; padding-left: 11px; display: flex; align-items: center; gap: 8px; }
.rail div svg { width: 32px; height: 32px; overflow: visible; }
.rail div svg.arrow { width: 10px; height: 6px; }
.rail .active { margin-left: 14px; padding-left: 3px; width: 41px; height: 39px; border: 2px solid #464646; border-radius: 4px; background: #2b2b2b; margin-top: 1px; }
.panels { display: flex; flex-direction: column; padding-left: 3px; min-height: 0; }
.panel { display: flex; flex-direction: column; min-height: 0; }
.layers { height: 460px; flex: none; }
.browser { flex: 1; }
.ptitle { display: flex; align-items: center; gap: 3px; height: 24px; flex: none; padding: 0 4px 0 3px; font-size: 14.500px; }
.ptitle span { flex: 1; }
.ptitle svg { width: 16px; height: 16px; }
.ptools { display: grid; align-items: center; flex: none; }
.ptools svg { width: 20px; height: 20px; overflow: visible; }
.ltools { height: 40px; margin-bottom: 3px; padding-left: 4px; grid-template-columns: 38px 35px 31px 35px 26px 22px 34px 32px 30px; }
.pressed { width: 30px; height: 29px; border: 2px solid #474747; border-radius: 3px; display: grid; place-items: center; background: #2b2b2b; }
.ptools svg.arrow { width: 10px; height: 6px; }
.layerlist, .browse { background: #1e1e1e; width: 373px; flex: 1; }
.layerlist li { height: 24px; display: flex; align-items: center; padding: 0 6px 0 30px; font-size: 16.500px; color: #dedede; }
.layerlist b { flex: 1; font-weight: 700; letter-spacing: .1px; }
.layerlist .sel { background: #474747; color: #fff; padding-right: 6px; }
.sel b { text-decoration: underline; text-underline-offset: 3px; text-decoration-thickness: 2px; text-decoration-skip-ink: none; }
.chk { width: 18px; height: 18px; background: #1a1a1a; border: 1px solid #242424; margin-right: 9px; }
.sw { width: 22px; height: 22px; margin-right: 8px; display: grid; }
.line { height: 3px; background: #8f3742; }
.green { background: #488048; border: 1px solid #5b935b; }
.beige { background: #cdc3bf; border: 1px solid #b8aeaa; }
.yellow, .brown { width: 4px; height: 4px; margin: 0 17px 0 9px; background: #d8b848; }
.brown { background: #8a5236; }
.ind { width: 22px; height: 22px; margin-left: 2px; color: #747474; background: #222; }
.ind.box { background: #252525; }
.navy { color: #4a5b70; }
.splitter { width: 24px; height: 4px; margin: 3px 0 3px 176px; }
.btools { height: 36px; padding: 0 0 0 9px; grid-template-columns: repeat(5, 33.600px); margin: 2px 0 5px; }
.browse { padding-top: 1px; font-size: 16.400px; font-weight: 500; color: #f0f0f0; }
.browse li { height: 24px; display: flex; align-items: center; padding-left: 6px; letter-spacing: .1px; white-space: pre; }
.browse li > svg { width: 22px; height: 20px; margin-right: 8px; }
.browse i { width: 23px; display: flex; align-items: center; padding-left: 3px; }
.browse i svg { width: 6px; height: 10px; }
.browse i svg.open { width: 10px; height: 6px; margin-left: -2px; }
.browse .child { padding-left: 33px; }
.vsplit { padding: 588px 0 0 3px; border-right: 2px solid #0c0c0c; }
.vsplit svg { width: 4px; height: 24px; }

/* Map canvas */
.canvas { width: 1257px; height: 1172px; background: #fff; overflow: hidden; }
.bld { fill: #cec3bf; stroke: #4b4745; stroke-width: 1.100; }
.track { fill: none; stroke: #20160f; stroke-width: 8.600; stroke-linecap: round; }
.track .core { stroke: #874d2e; stroke-width: 5.600; }
.cent { stroke: #332c14; stroke-width: 8.800; }
.cent .core { stroke: #ceae45; stroke-width: 5.600; }
.buf { fill: rgba(90,184,94,.62); stroke: rgba(50,70,50,.6); stroke-width: 1.300; }
.ray { fill: none; stroke: #d4302f; stroke-width: 2.400; }
```
